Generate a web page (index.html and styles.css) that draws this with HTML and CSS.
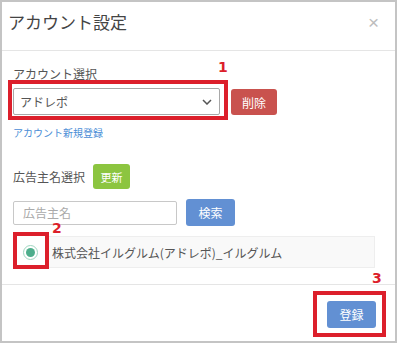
FILE: index.html
```html
<!DOCTYPE html>
<html lang="ja">
<head>
  <meta charset="UTF-8">
  <meta name="viewport" content="width=device-width, initial-scale=1.0">
  <title>アカウント設定</title>
  <link rel="stylesheet" href="styles.css">
</head>
<body>
  <div class="modal">
    <div class="modal-header">
      <h4 class="modal-title">アカウント設定</h4>
      <span class="close">&times;</span>
    </div>

    <div class="modal-body">
      <div class="field-label">アカウント選択</div>
      <div class="account-row">
        <div class="select mark mark-select">
          <span class="mark-num">1</span>
          <span class="select-value">アドレポ</span>
          <svg class="chevron" width="10" height="6" viewBox="0 0 10 6">
            <polyline points="1,1 5,5 9,1" fill="none" stroke="#555" stroke-width="1.5"/>
          </svg>
        </div>
        <button class="btn btn-danger">削除</button>
      </div>
      <a class="new-link" href="#">アカウント新規登録</a>

      <div class="advertiser-head">
        <span class="field-label">広告主名選択</span>
        <button class="btn btn-success">更新</button>
      </div>
      <div class="search-row">
        <input class="text-input" type="text" placeholder="広告主名">
        <button class="btn btn-primary">検索</button>
      </div>

      <div class="result-row">
        <div class="radio-cell mark mark-radio">
          <span class="mark-num">2</span>
          <span class="radio"></span>
        </div>
        <div class="result">株式会社イルグルム(アドレポ)_イルグルム</div>
      </div>
    </div>

    <div class="modal-footer">
      <button class="btn btn-primary mark mark-submit">
        <span class="mark-num">3</span>
        登録
      </button>
    </div>
  </div>
</body>
</html>
```

FILE: styles.css
```css
* {
  margin: 0;
  padding: 0;
  box-sizing: border-box;
}
body {
  background: #fff;
  font-family: "Noto Sans CJK JP", "Liberation Sans", sans-serif;
  color: #555;
}
.modal {
  width: 397px;
  height: 343px;
  border: 2px solid #c4c4c4;
  display: flex;
  flex-direction: column;
  background: #fff;
}

/* header */
.modal-header {
  height: 49px;
  padding: 8px 16px 0 6px;
  display: flex;
  justify-content: space-between;
  align-items: flex-start;
  border-bottom: 1px solid #e5e5e5;
}
.modal-title {
  font-size: 17px;
  line-height: 24px;
  font-weight: normal;
  color: #444;
}
.close {
  font-family: "Liberation Sans", sans-serif;
  font-size: 19px;
  line-height: 24px;
  margin-top: 1px;
  color: #bdbdbd;
}

/* body */
.modal-body {
  flex: 1;
  padding: 15px 11px 0;
  display: flex;
  flex-direction: column;
  align-items: flex-start;
}
.field-label {
  font-size: 12px;
  line-height: 16px;
  color: #555;
}
.account-row {
  margin-top: 6px;
  display: flex;
  align-items: center;
  gap: 11px;
}
.select {
  width: 207px;
  height: 27px;
  border: 1px solid #a8a8a8;
  border-radius: 2px;
  padding: 0 7px 0 6px;
  display: flex;
  align-items: center;
  justify-content: space-between;
  font-size: 12px;
  color: #555;
}
.btn {
  border: none;
  border-radius: 3px;
  color: #fff;
  font-family: "Noto Sans CJK JP", "Liberation Sans", sans-serif;
  font-size: 12px;
  height: 27px;
  width: 49px;
}
.btn-danger {
  background: #c9524e;
  width: 46px;
  height: 26px;
  margin-top: 1px;
}
.btn-success {
  background: #8cc540;
  width: 37px;
  height: 25px;
  font-size: 11px;
}
.btn-primary {
  background: #6290d3;
}
.new-link {
  margin-top: 11px;
  font-size: 10px;
  line-height: 14px;
  color: #4a8dd6;
  text-decoration: none;
}
.advertiser-head {
  margin-top: 24px;
  display: flex;
  align-items: center;
  gap: 8px;
}
.search-row {
  margin-top: 10px;
  display: flex;
  align-items: center;
  gap: 9px;
}
.text-input {
  width: 164px;
  height: 24px;
  border: 1px solid #c8c8c8;
  border-radius: 2px;
  padding-left: 9px;
  font-family: "Noto Sans CJK JP", "Liberation Sans", sans-serif;
  font-size: 12px;
  color: #555;
}
.text-input::placeholder {
  color: #aaa;
}
.result-row {
  margin-top: 10px;
  display: flex;
}
.radio-cell {
  width: 32px;
  height: 32px;
  padding-left: 10px;
  display: flex;
  align-items: center;
}
.radio {
  width: 15px;
  height: 15px;
  border-radius: 50%;
  border: 1px solid #9fd6c0;
  display: flex;
  align-items: center;
  justify-content: center;
}
.radio::before {
  content: '';
  width: 9px;
  height: 9px;
  border-radius: 50%;
  background: #4eae8c;
}
.result {
  width: 330px;
  height: 32px;
  border: 1px solid #eee;
  background: #f9f9f9;
  padding-left: 6px;
  display: flex;
  align-items: center;
  font-size: 12px;
  color: #555;
}

/* footer */
.modal-footer {
  height: 57px;
  border-top: 1px solid #e5e5e5;
  padding: 16px 19px 0 0;
  display: flex;
  justify-content: flex-end;
  align-items: flex-start;
}

/* red annotations */
.mark {
  position: relative;
}
.mark::after {
  content: '';
  position: absolute;
  border: 4px solid #dc1f2b;
}
.mark-num {
  position: absolute;
  font-family: "DejaVu Sans", sans-serif;
  font-weight: bold;
  font-size: 14px;
  line-height: 14px;
  color: #dc1f2b;
}
.mark-select::after {
  top: -9px;
  left: -6px;
  right: -9px;
  bottom: -6px;
}
.mark-select .mark-num {
  left: 204px;
  top: -29px;
}
.mark-radio::after {
  top: -4px;
  left: 0;
  right: -4px;
  bottom: -1px;
}
.mark-radio .mark-num {
  left: 39px;
  top: -15px;
}
.mark-submit::after {
  top: -10px;
  left: -14px;
  right: -10px;
  bottom: -9px;
}
.mark-submit .mark-num {
  left: 45px;
  top: -30px;
}
```
